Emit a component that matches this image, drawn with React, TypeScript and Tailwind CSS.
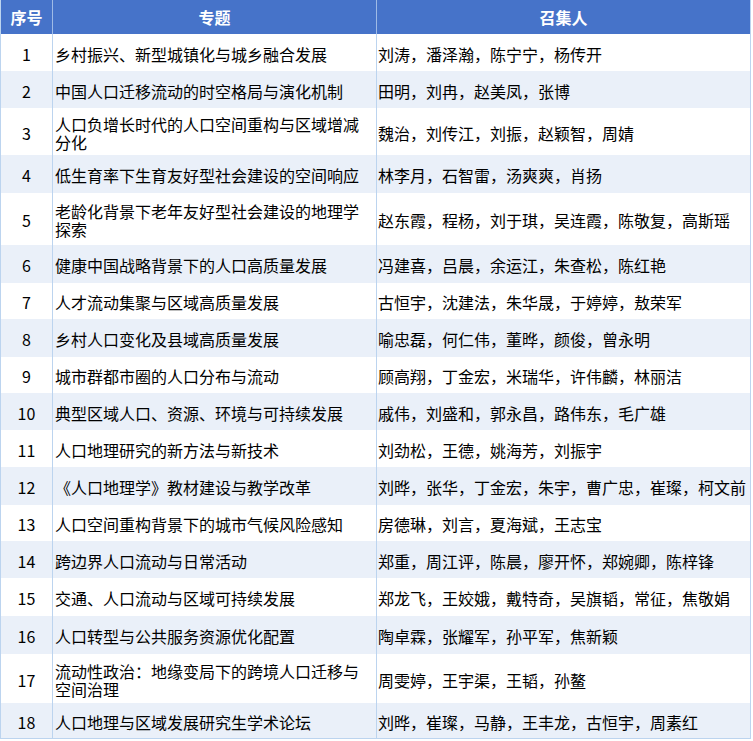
import React from "react";

const rows: { n: number; t: string; p: string; h: number }[] = [
  { n: 1, t: "乡村振兴、新型城镇化与城乡融合发展", p: "刘涛，潘泽瀚，陈宁宁，杨传开", h: 37 },
  { n: 2, t: "中国人口迁移流动的时空格局与演化机制", p: "田明，刘冉，赵美凤，张博", h: 37 },
  { n: 3, t: "人口负增长时代的人口空间重构与区域增减分化", p: "魏治，刘传江，刘振，赵颖智，周婧", h: 47 },
  { n: 4, t: "低生育率下生育友好型社会建设的空间响应", p: "林李月，石智雷，汤爽爽，肖扬", h: 38 },
  { n: 5, t: "老龄化背景下老年友好型社会建设的地理学探索", p: "赵东霞，程杨，刘于琪，吴连霞，陈敬复，高斯瑶", h: 52 },
  { n: 6, t: "健康中国战略背景下的人口高质量发展", p: "冯建喜，吕晨，余运江，朱查松，陈红艳", h: 38 },
  { n: 7, t: "人才流动集聚与区域高质量发展", p: "古恒宇，沈建法，朱华晟，于婷婷，敖荣军", h: 36 },
  { n: 8, t: "乡村人口变化及县域高质量发展", p: "喻忠磊，何仁伟，董晔，颜俊，曾永明", h: 38 },
  { n: 9, t: "城市群都市圈的人口分布与流动", p: "顾高翔，丁金宏，米瑞华，许伟麟，林丽洁", h: 36 },
  { n: 10, t: "典型区域人口、资源、环境与可持续发展", p: "戚伟，刘盛和，郭永昌，路伟东，毛广雄", h: 37 },
  { n: 11, t: "人口地理研究的新方法与新技术", p: "刘劲松，王德，姚海芳，刘振宇", h: 37 },
  { n: 12, t: "《人口地理学》教材建设与教学改革", p: "刘晔，张华，丁金宏，朱宇，曹广忠，崔璨，柯文前", h: 38 },
  { n: 13, t: "人口空间重构背景下的城市气候风险感知", p: "房德琳，刘言，夏海斌，王志宝", h: 36 },
  { n: 14, t: "跨边界人口流动与日常活动", p: "郑重，周江评，陈晨，廖开怀，郑婉卿，陈梓锋", h: 37 },
  { n: 15, t: "交通、人口流动与区域可持续发展", p: "郑龙飞，王姣娥，戴特奇，吴旗韬，常征，焦敬娟", h: 38 },
  { n: 16, t: "人口转型与公共服务资源优化配置", p: "陶卓霖，张耀军，孙平军，焦新颖", h: 38 },
  { n: 17, t: "流动性政治：地缘变局下的跨境人口迁移与空间治理", p: "周雯婷，王宇渠，王韬，孙鳌", h: 49 },
  { n: 18, t: "人口地理与区域发展研究生学术论坛", p: "刘晔，崔璨，马静，王丰龙，古恒宇，周素红", h: 35 },
];

const font = {
  fontFamily: '"Noto Sans CJK SC", "Noto Sans", sans-serif',
};

export default function App() {
  return (
    <div className="bg-white w-[753px] h-[741px]" style={font}>
      <div className="w-[751px] border-l border-r border-b border-[#bcd4ef] text-[16px] text-black">
        <div className="grid grid-cols-[52px_324px_373px] h-[34px] bg-[#4673c9] text-white font-bold">
          <div className="flex items-center justify-center border-r border-[#9fbbe6]">序号</div>
          <div className="flex items-center justify-center border-r border-[#9fbbe6]">专题</div>
          <div className="flex items-center justify-center">召集人</div>
        </div>
        {rows.map((r, i) => (
          <div
            key={r.n}
            className={
              "grid grid-cols-[52px_324px_373px] " + (i % 2 === 1 ? "bg-[#eaf0f9]" : "bg-white")
            }
            style={{ height: r.h }}
          >
            <div className="flex items-center justify-center border-r border-[#bcd4ef] pt-[2px]">{r.n}</div>
            <div className="flex items-center border-r border-[#bcd4ef] pl-[2px] pr-[6px] pt-[2px] leading-[18px]">
              {r.t}
            </div>
            <div className="flex items-center pl-[1px] pt-[2px] leading-[18px] whitespace-nowrap">{r.p}</div>
          </div>
        ))}
      </div>
    </div>
  );
}
